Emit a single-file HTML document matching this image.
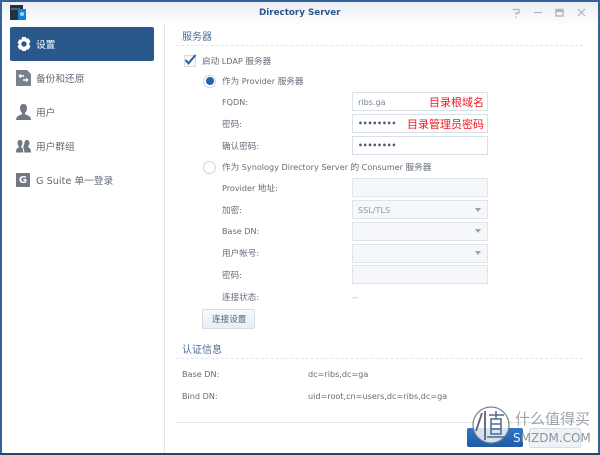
<!DOCTYPE html>
<html><head><meta charset="utf-8">
<style>
html,body{margin:0;padding:0;width:600px;height:455px;overflow:hidden;background:#fff}
#w{position:relative;width:600px;height:455px;overflow:hidden;background:#fff;font-family:"DejaVu Sans","Noto Sans CJK SC",sans-serif;font-size:8.1px;color:#646d78;filter:blur(.25px)}
#w div,#w svg{position:absolute}
i{font-style:normal;font-size:8.6px}
.t{white-space:nowrap;line-height:12px;height:12px}
.f{left:352px;width:134px;height:17px;border:1px solid #d9e0e8;background:#fff}
.d{background:#f5f7fa;border-color:#dfe4ea}
.dots{left:358px;color:#505a66;font-size:7.5px;font-weight:bold}
.arr{left:475px;width:0;height:0;border-left:3.5px solid transparent;border-right:3.5px solid transparent;border-top:4px solid #9aa3ad}
.red{color:#f01822;font-size:11px;line-height:14px;height:14px;white-space:nowrap}
#w .nav{left:36px;font-size:9.7px;color:#5f6975;margin-top:2px}
#w .h{color:#4c6e96;font-size:10px;left:182px;margin-top:2px}
</style></head><body><div id="w">
<div style="left:0;top:0;width:600px;height:26px;background:linear-gradient(#e8edf3,#fff)"></div>
<div style="left:0;top:0;width:600px;height:2px;background:#36609a"></div>
<div style="left:0;top:0;width:2px;height:455px;background:#36609a"></div>
<div style="right:0;top:0;width:2px;height:455px;background:#36609a"></div>
<div style="left:0;top:453px;width:600px;height:2px;background:#26466f"></div>

<!-- app icon -->
<div style="left:10px;top:5px;width:13px;height:15px;background:#26303f"></div>
<div style="left:11px;top:8px;width:9px;height:2px;background:#3e6a72"></div>
<div style="left:18px;top:9px;width:8px;height:11px;background:#1580d8;border-radius:1px"></div>
<div style="left:20px;top:12px;width:4px;height:4px;border-radius:50%;background:#a6d4f4"></div>

<div class="t" style="left:259px;top:7px;font-weight:bold;font-size:8.75px;color:#2e5487">Directory Server</div>

<!-- window buttons -->
<svg style="left:510px;top:6px" width="80" height="13" fill="none" stroke="#b0b5bb" stroke-width="1.2">
<path d="M2.500 3.500h6.500v3.500H6v2M6 10.500v1.500"/>
<path d="M24 6.500h8"/>
<rect x="46" y="3.500" width="7" height="6.500" stroke-width="1.400"/><path d="M46 5h7" stroke-width="2"/>
<path d="M68 3l7 7M75 3l-7 7"/>
</svg>

<!-- sidebar -->
<div style="left:164px;top:24px;width:1px;height:429px;background:#e3e6ea"></div>
<div style="left:10px;top:27px;width:144px;height:34px;background:#2a578c;border-radius:2px"></div>
<svg style="left:16px;top:35px" width="16" height="18" viewBox="0 0 16 18"><path fill="#fff" fill-rule="evenodd" d="M6 2h4l.6 1.800 1.900-.4 2 3.400-1.300 1.400v1.600l1.300 1.400-2 3.400-1.900-.4L10 16H6l-.6-1.800-1.900.4-2-3.400 1.300-1.400V9.200L1.500 7.800l2-3.400 1.900.4zM8 6.300a2.700 2.700 0 1 0 0 5.400 2.700 2.700 0 0 0 0-5.400z"/></svg>
<div class="t nav" style="top:38px;color:#fff">设置</div>

<svg style="left:16px;top:70px" width="15" height="16" viewBox="0 0 15 16"><path fill="#79828c" d="M0 0h11l4 4v12H0z"/><path fill="none" stroke="#fff" stroke-width="1.400" d="M3 6h5M3 6l2-1.500M3 6l2 1.500M7 10h5M12 10l-2-1.500M12 10l-2 1.500"/></svg>
<div class="t nav" style="top:72px">备份和还原</div>

<svg style="left:16px;top:104px" width="15" height="16" viewBox="0 0 15 16"><path fill="#6e7782" d="M7.500 0c2.500 0 3.500 2 3.500 4.300 0 2-1 3.700-2 4.500v1.500c2 .8 6 1.600 6 5.700H0c0-4.100 4-4.900 6-5.700V8.800c-1-.8-2-2.500-2-4.500C4 2 5 0 7.500 0z"/></svg>
<div class="t nav" style="top:106px">用户</div>

<svg style="left:16px;top:140px" width="15" height="13" viewBox="0 0 15 13"><path fill="#6e7782" d="M4 0c1.700 0 2.500 1.300 2.500 3 0 1.400-.6 2.600-1.300 3.200v1.200C6 8 7.300 8.500 7.300 12.500H0C0 8.500 1.500 8 2.800 7.400V6.200C2.100 5.600 1.500 4.400 1.500 3 1.500 1.300 2.300 0 4 0zM11 0c1.700 0 2.500 1.300 2.500 3 0 1.400-.6 2.600-1.300 3.200v1.200c1.300.6 2.800 1.100 2.800 5.100H8.300c0-3-.6-4.200-1.600-5l1-.7V6.200C7.100 5.600 8.500 4.400 8.500 3 8.500 1.300 9.300 0 11 0z"/></svg>
<div class="t nav" style="top:140px">用户群组</div>

<div style="left:16px;top:173px;width:14px;height:14px;background:#6e7782;border-radius:1px"></div>
<div class="t" style="left:16px;top:175px;width:14px;text-align:center;color:#fff;font-weight:bold;font-size:10px">G</div>
<div class="t nav" style="top:174px">G Suite 单一登录</div>

<!-- server section -->
<div class="t h" style="top:30px">服务器</div>
<div style="left:176px;top:45px;width:407px;border-top:1px dashed #dfe5ec"></div>

<div style="left:184px;top:55px;width:10px;height:10px;border:1px solid #d6dde5;background:#f6f8fa"></div>
<svg style="left:183px;top:53px" width="15" height="13"><path d="M2.500 7l3 3.300L12.500 2" fill="none" stroke="#2a5f9e" stroke-width="2"/></svg>
<div class="t" style="left:202px;top:55px"><i>启动</i> LDAP <i>服务器</i></div>

<div style="left:203px;top:75px;width:11px;height:11px;border:1px solid #cdd6e0;border-radius:50%;background:#fff"></div>
<div style="left:205.500px;top:77px;width:8px;height:8px;border-radius:50%;background:#2a62a8"></div>
<div class="t" style="left:222px;top:75px"><i>作为</i> Provider <i>服务器</i></div>

<div class="t" style="left:222px;top:96px">FQDN:</div>
<div class="f" style="top:92px"></div>
<div class="t" style="left:358px;top:96px;color:#7a828c">ribs.ga</div>
<div class="red" style="left:429px;top:96px">目录根域名</div>

<div class="t" style="left:222px;top:118px"><i>密码</i>:</div>
<div class="f" style="top:114px"></div>
<div class="t dots" style="top:118px">••••••••</div>
<div class="red" style="left:407px;top:118px">目录管理员密码</div>

<div class="t" style="left:222px;top:140px"><i>确认密码</i>:</div>
<div class="f" style="top:136px"></div>
<div class="t dots" style="top:140px">••••••••</div>

<div style="left:203px;top:161px;width:11px;height:11px;border:1px solid #cdd6e0;border-radius:50%;background:#fff"></div>
<div class="t" style="left:222px;top:161px"><i>作为</i> Synology Directory Server <i>的</i> Consumer <i>服务器</i></div>

<div class="t" style="left:222px;top:182px">Provider <i>地址</i>:</div>
<div class="f d" style="top:178px"></div>
<div class="t" style="left:222px;top:204px"><i>加密</i>:</div>
<div class="f d" style="top:200px"></div>
<div class="t" style="left:358px;top:204px;color:#9098a2">SSL/TLS</div>
<div class="arr" style="top:208px"></div>
<div class="t" style="left:222px;top:225px">Base DN:</div>
<div class="f d" style="top:222px"></div>
<div class="arr" style="top:229px"></div>
<div class="t" style="left:222px;top:247px"><i>用户帐号</i>:</div>
<div class="f d" style="top:244px"></div>
<div class="arr" style="top:251px"></div>
<div class="t" style="left:222px;top:269px"><i>密码</i>:</div>
<div class="f d" style="top:265px"></div>
<div class="t" style="left:222px;top:291px"><i>连接状态</i>:</div>
<div class="t" style="left:352px;top:291px;color:#a4aab2">--</div>

<div style="left:202px;top:309px;width:51px;height:18px;border:1px solid #d3dde8;border-radius:2px;background:linear-gradient(#f7f9fb,#e9eff5)"></div>
<div class="t" style="left:212px;top:313px;color:#55606c"><i>连接设置</i></div>

<!-- auth section -->
<div class="t h" style="top:343px">认证信息</div>
<div style="left:176px;top:358px;width:407px;border-top:1px dashed #dfe6ee"></div>
<div class="t" style="left:182px;top:368px">Base DN:</div>
<div class="t" style="left:308px;top:368px">dc=ribs,dc=ga</div>
<div class="t" style="left:182px;top:390px">Bind DN:</div>
<div class="t" style="left:308px;top:390px">uid=root,cn=users,dc=ribs,dc=ga</div>
<div style="left:176px;top:422px;width:407px;height:1px;background:#e2e4e6"></div>

<!-- footer buttons -->
<div style="left:467px;top:428px;width:56px;height:19px;border-radius:2px;background:linear-gradient(#2f76c4,#1d5ba8)"></div>
<div style="left:529px;top:428px;width:50px;height:18px;border:1px solid #d6dfe8;border-radius:2px;background:#edf2f7"></div>

<!-- watermark -->
<svg style="left:471px;top:406px" width="40" height="38" viewBox="0 0 40 38"><circle cx="20" cy="19" r="18" fill="#fff" fill-opacity=".8" stroke="#7c8188" stroke-width="1.200"/><path d="M11 7L5 25M14 5v29" stroke="#5c6168" stroke-width="1.800" fill="none"/><path d="M18 9h15M25 5v8M20 13h10v15H20zM20 18h10M20 23h10M16 31h18" stroke="#4f6a8e" stroke-width="1.500" fill="none"/></svg>
<div class="t" style="left:515px;top:410px;font-size:15px;line-height:18px;height:18px;width:75px;overflow:hidden;color:#a0a4aa;font-family:'Noto Sans CJK SC',sans-serif">什么值得买</div>
<div class="t" style="left:513px;top:432px;font-size:12px;color:#8e949b;width:78px;overflow:hidden"><span style="color:#e8eef5">S</span>MZDM.COM</div>
</div></body></html>
